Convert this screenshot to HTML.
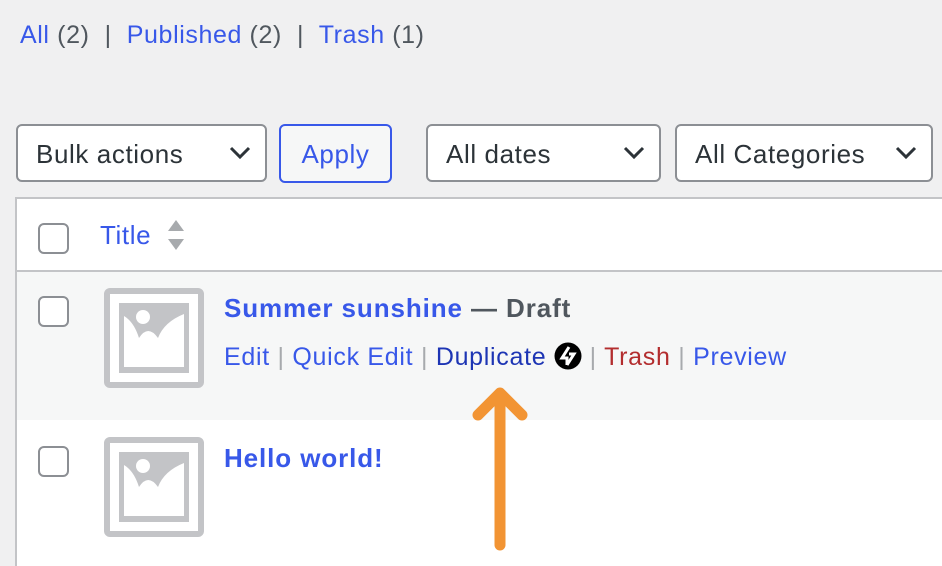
<!DOCTYPE html><html style="height:566px;overflow:hidden"><head><style>
body{margin:0;width:942px;height:566px;background:#f0f0f1;font-family:"Liberation Sans",sans-serif;position:relative;overflow:hidden}
.a{position:absolute;white-space:nowrap}
.sel{position:absolute;top:124px;height:58px;background:#fff;border:2px solid #8c8f94;border-radius:6px;box-sizing:border-box;font-size:26px;letter-spacing:0.6px;color:#2c3338;line-height:56px;padding-left:18px}
.sel svg{position:absolute;right:14px;top:20px}
.cb{position:absolute;left:38px;width:31px;height:31px;border:2px solid #8c8f94;border-radius:6px;box-sizing:border-box;background:#fff}
.th{position:absolute;left:104px;width:100px;height:100px;border:6px solid #c3c4c7;border-radius:6px;box-sizing:border-box;background:#fff}
.b{color:#3858e9}.s{color:#a7aaad}
</style></head><body>
<div class="a" style="left:20px;top:21px;font-size:25px;letter-spacing:0.6px;color:#50575e"><span class="b">All</span> (2) &nbsp;|&nbsp; <span class="b">Published</span> (2) &nbsp;|&nbsp; <span class="b">Trash</span> (1)</div>
<div class="sel" style="left:16px;width:251px">Bulk actions<svg width="22" height="14" viewBox="0 0 22 14"><path d="M2 2l9 9 9-9" stroke="#2c3338" stroke-width="3" fill="none"/></svg></div>
<div class="a" style="left:279px;top:124px;width:113px;height:59px;border:2px solid #3858e9;border-radius:6px;box-sizing:border-box;background:#f6f7f7;color:#3858e9;font-size:26px;letter-spacing:0.6px;text-align:center;line-height:57px">Apply</div>
<div class="sel" style="left:426px;width:235px">All dates<svg width="22" height="14" viewBox="0 0 22 14"><path d="M2 2l9 9 9-9" stroke="#2c3338" stroke-width="3" fill="none"/></svg></div>
<div class="sel" style="left:675px;width:258px">All Categories<svg width="22" height="14" viewBox="0 0 22 14"><path d="M2 2l9 9 9-9" stroke="#2c3338" stroke-width="3" fill="none"/></svg></div>
<div class="a" style="left:15px;top:197px;width:940px;height:369px;border:2px solid #c3c4c7;border-bottom:0;box-sizing:border-box;background:#fff"></div>
<div class="a" style="left:17px;top:270px;width:930px;height:2px;background:#c3c4c7"></div>
<div class="a" style="left:17px;top:272px;width:930px;height:148px;background:#f6f7f7"></div>
<div class="cb" style="top:223px"></div>
<div class="a b" style="left:100px;top:220px;font-size:26px;letter-spacing:0.6px">Title</div>
<svg class="a" style="left:166px;top:219px" width="20" height="32"><path d="M10 1l8 11H2z M10 31l8-11H2z" fill="#a7aaad"/></svg>
<div class="cb" style="top:296px"></div>
<div class="th" style="top:288px"><svg width="88" height="88" viewBox="0 0 88 88"><rect x="9" y="9" width="70" height="70" fill="#c3c4c7"/><path d="M14 22Q24 28 29 44Q38 30 48 44Q54 28 74 20V73H14Z" fill="#fff"/><circle cx="33" cy="23" r="7" fill="#fff"/></svg></div>
<div class="a" style="left:224px;top:293px;font-size:26px;font-weight:bold;letter-spacing:0.9px"><span class="b">Summer sunshine</span> <span style="color:#50575e">— Draft</span></div>
<div class="a" style="left:224px;top:342px;font-size:25px;letter-spacing:0.7px;color:#3858e9">Edit <span class="s">|</span> Quick Edit <span class="s">|</span> <span style="color:#1d35b4">Duplicate</span> <svg width="28" height="28" viewBox="0 0 28 28" style="vertical-align:-5px"><circle cx="14" cy="14" r="13.5" fill="#000"/><path d="M15 5l-7 11h5v7" stroke="#fff" stroke-width="3" fill="none"/><path d="M13 23l7-11h-5" stroke="#fff" stroke-width="3" fill="none"/></svg> <span class="s">|</span> <span style="color:#b32d2e">Trash</span> <span class="s">|</span> <span class="b">Preview</span></div>
<div class="cb" style="top:446px"></div>
<div class="th" style="top:437px"><svg width="88" height="88" viewBox="0 0 88 88"><rect x="9" y="9" width="70" height="70" fill="#c3c4c7"/><path d="M14 22Q24 28 29 44Q38 30 48 44Q54 28 74 20V73H14Z" fill="#fff"/><circle cx="33" cy="23" r="7" fill="#fff"/></svg></div>
<div class="a b" style="left:224px;top:443px;font-size:26px;font-weight:bold;letter-spacing:0.9px">Hello world!</div>
<svg class="a" style="left:470px;top:385px" width="60" height="170"><path d="M30 160V8M8 30L30 8l22 22" stroke="#f29433" stroke-width="11" stroke-linecap="round" stroke-linejoin="round" fill="none"/></svg>
</body></html>
